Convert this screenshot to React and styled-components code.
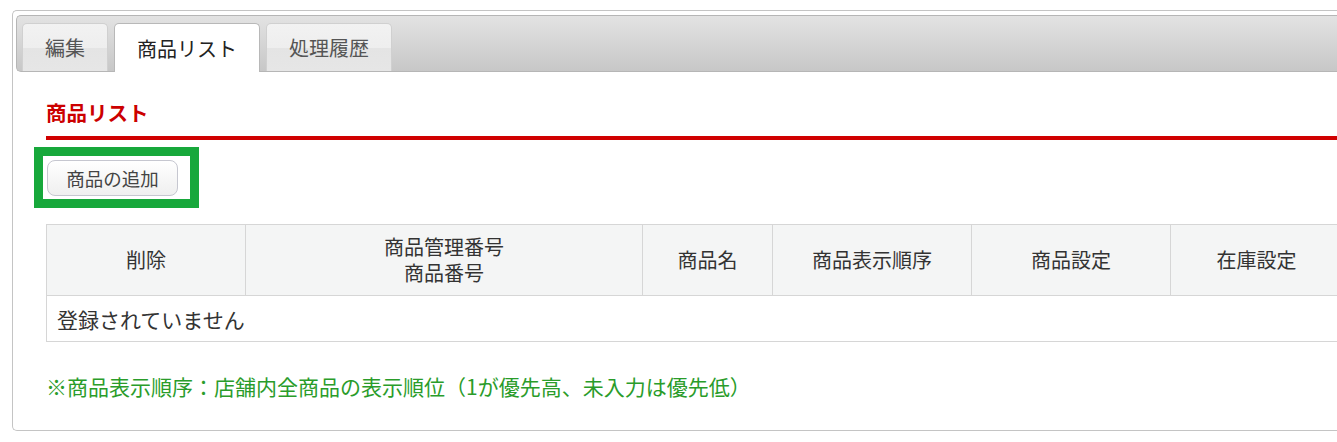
import React from "react";
import styled, { createGlobalStyle } from "styled-components";

const Global = createGlobalStyle`
  html, body { margin: 0; padding: 0; background: #fff; }
  body { font-family: "Noto Sans CJK JP", "Noto Sans", sans-serif; color: #333; }
`;

const Page = styled.div`
  padding: 10px 0 0 12px;
  width: 1337px;
  box-sizing: border-box;
  overflow: hidden;
`;

const Panel = styled.div`
  border: 1px solid #c4c4c4;
  border-right: none;
  border-radius: 5px 0 0 5px;
  padding: 4px 0 0 3px;
  height: 421px;
  box-sizing: border-box;
  width: 1400px;
`;

const TabBar = styled.div`
  height: 57px;
  box-sizing: border-box;
  border: 1px solid #b6b6b6;
  border-right: none;
  border-radius: 5px 0 0 5px;
  background: linear-gradient(#e3e3e3, #c7c7c7);
  display: flex;
  align-items: flex-end;
  gap: 6px;
  padding-left: 5px;
`;

const Tab = styled.div`
  height: ${(p) => (p.$active ? 49 : 48)}px;
  margin-bottom: ${(p) => (p.$active ? -1 : 0)}px;
  box-sizing: border-box;
  padding: 0 22px;
  display: flex;
  align-items: center;
  font-size: 20px;
  color: ${(p) => (p.$active ? "#222" : "#555")};
  border: 1px solid ${(p) => (p.$active ? "#b8b8b8" : "#d0d0d0")};
  border-bottom: none;
  border-radius: 5px 5px 0 0;
  background: ${(p) =>
    p.$active ? "#fff" : "linear-gradient(#f2f2f2 0%, #eeeeee 50%, #e4e4e4 51%, #e6e6e6 100%)"};
`;

const Content = styled.div`
  padding: 26px 0 0 30px;
`;

const Heading = styled.h2`
  margin: 0;
  font-size: 20.5px;
  font-weight: bold;
  color: #cc0000;
  line-height: 28px;
  padding-bottom: 10px;
  border-bottom: 4px solid #d00000;
`;

const ButtonRow = styled.div`
  padding-top: 20px;
  height: 84px;
  box-sizing: border-box;
`;

const Marked = styled.span`
  position: relative;
  display: inline-block;
`;

const Highlight = styled.span`
  position: absolute;
  left: -12px;
  top: -13px;
  right: -21px;
  bottom: -12px;
  border: 9px solid #17a83b;
  pointer-events: none;
`;

const Button = styled.button`
  width: 131px;
  height: 36px;
  margin-left: 1px;
  border: 1px solid #c6c7d0;
  border-radius: 8px;
  background: linear-gradient(#ffffff, #efefef);
  font-family: inherit;
  font-size: 18.5px;
  color: #444;
  padding: 0;
  cursor: pointer;
`;

const Table = styled.table`
  border-collapse: collapse;
  width: 1290px;
  table-layout: fixed;
  font-size: 20px;
`;

const Th = styled.th`
  width: ${(p) => p.$w}px;
  height: 70px;
  background: #f4f5f5;
  border: 1px solid #d6d6d6;
  font-weight: normal;
  color: #333;
  line-height: 26px;
  text-align: center;
  padding: 0;
`;

const Td = styled.td`
  height: 45px;
  border: 1px solid #d6d6d6;
  padding: 0 10px;
  font-size: 21px;
  color: #333;
`;

const Note = styled.p`
  margin: 29px 0 0;
  font-size: 21px;
  color: #2a9c2a;
`;

const cols = [
  { w: 198, label: ["削除"] },
  { w: 396, label: ["商品管理番号", "商品番号"] },
  { w: 129, label: ["商品名"] },
  { w: 198, label: ["商品表示順序"] },
  { w: 198, label: ["商品設定"] },
  { w: 171, label: ["在庫設定"] },
];

export default function App() {
  return (
    <>
      <Global />
      <Page>
        <Panel>
          <TabBar>
            <Tab>編集</Tab>
            <Tab $active>商品リスト</Tab>
            <Tab>処理履歴</Tab>
          </TabBar>
          <Content>
            <Heading>商品リスト</Heading>
            <ButtonRow>
              <Marked>
                <Button>商品の追加</Button>
                <Highlight />
              </Marked>
            </ButtonRow>
            <Table>
              <thead>
                <tr>
                  {cols.map((c, i) => (
                    <Th key={i} $w={c.w}>
                      {c.label.map((l, j) => (
                        <React.Fragment key={j}>
                          {j > 0 && <br />}
                          {l}
                        </React.Fragment>
                      ))}
                    </Th>
                  ))}
                </tr>
              </thead>
              <tbody>
                <tr>
                  <Td colSpan={6}>登録されていません</Td>
                </tr>
              </tbody>
            </Table>
            <Note>※商品表示順序：店舗内全商品の表示順位（1が優先高、未入力は優先低）</Note>
          </Content>
        </Panel>
      </Page>
    </>
  );
}
